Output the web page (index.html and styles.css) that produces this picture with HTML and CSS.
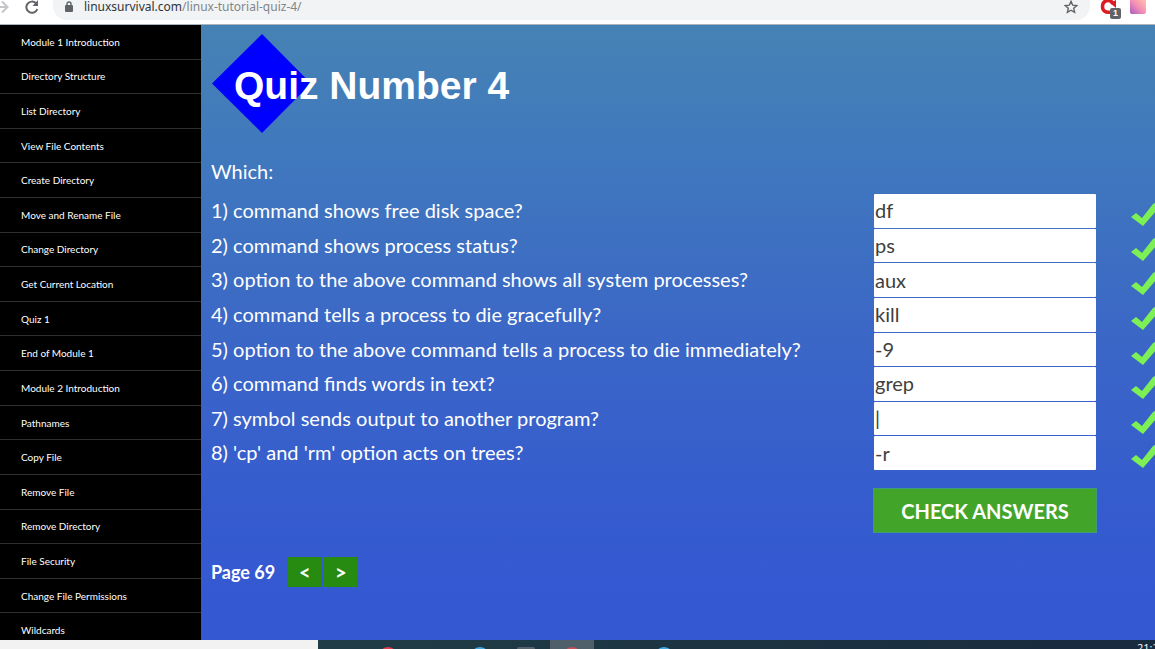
FILE: index.html
```html
<!DOCTYPE html>
<html lang="en">
<head>
<meta charset="utf-8">
<title>Linux Survival - Quiz 4</title>
<link rel="stylesheet" href="styles.css">
</head>
<body>
<header class="toolbar">
  <button class="tool forward" aria-label="Forward"><svg width="12" height="14" viewBox="0 0 12 14"><path d="M0 7H8M2 1.500L7.500 7L2 12.500" fill="none" stroke="#c3c5c8" stroke-width="2"/></svg></button>
  <button class="tool reload" aria-label="Reload"><svg width="14" height="14" viewBox="0 0 14 14"><path d="M12.300 9A5.600 5.600 0 1 1 11 3.300" fill="none" stroke="#5f6368" stroke-width="2"/><path d="M13 0V6H7.500Z" fill="#5f6368"/></svg></button>
  <div class="address">
    <svg width="8" height="12" viewBox="0 0 8 12"><rect y="4" width="8" height="7" rx="1" fill="#5f6368"/><path d="M2 5V3a2 2 0 0 1 4 0V5" fill="none" stroke="#5f6368" stroke-width="1.400"/></svg>
    <span class="url"><span class="host">linuxsurvival.com</span>/linux-tutorial-quiz-4/</span>
    <button class="tool star" aria-label="Bookmark"><svg width="14" height="14" viewBox="0 0 14 14"><path d="M7 1.400L8.700 5.200L12.800 5.600L9.700 8.300L10.600 12.300L7 10.200L3.400 12.300L4.300 8.300L1.200 5.600L5.300 5.200Z" fill="none" stroke="#5f6368" stroke-width="1.400"/></svg></button>
  </div>
  <button class="tool extension" aria-label="Extension"><svg width="22" height="22" viewBox="0 0 22 22"><path d="M13 3.500C10 -1.500 2.500 0 2.500 6.500C2.500 11 6 13 10 12" fill="none" stroke="#dc1c22" stroke-width="3.500"/><path d="M10 3L16 0V8Z" fill="#dc1c22"/></svg><span class="badge">1</span></button>
  <span class="profile"></span>
</header>

<div class="page">
  <nav class="sidebar">
    <ul class="modules">
      <li><a href="#">Module 1 Introduction</a></li>
      <li><a href="#">Directory Structure</a></li>
      <li><a href="#">List Directory</a></li>
      <li><a href="#">View File Contents</a></li>
      <li><a href="#">Create Directory</a></li>
      <li><a href="#">Move and Rename File</a></li>
      <li><a href="#">Change Directory</a></li>
      <li><a href="#">Get Current Location</a></li>
      <li><a href="#">Quiz 1</a></li>
      <li><a href="#">End of Module 1</a></li>
      <li><a href="#">Module 2 Introduction</a></li>
      <li><a href="#">Pathnames</a></li>
      <li><a href="#">Copy File</a></li>
      <li><a href="#">Remove File</a></li>
      <li><a href="#">Remove Directory</a></li>
      <li><a href="#">File Security</a></li>
      <li><a href="#">Change File Permissions</a></li>
      <li><a href="#">Wildcards</a></li>
    </ul>
  </nav>

  <main class="content">
    <div class="heading">
      <svg class="diamond" width="100" height="100" viewBox="0 0 100 100"><path d="M50 0L99 49.500L50 99L0 49.500Z" fill="#0000ff"/></svg>
      <h1>Quiz Number 4</h1>
    </div>
    <p class="lead">Which:</p>
    <form class="quiz">
      <div class="rows">
        <div class="row"><label for="q1">1) command shows free disk space?</label><input id="q1" type="text" value="df"><svg class="tick" viewBox="0 0 34 25"><use href="#check"/></svg></div>
        <div class="row"><label for="q2">2) command shows process status?</label><input id="q2" type="text" value="ps"><svg class="tick" viewBox="0 0 34 25"><use href="#check"/></svg></div>
        <div class="row"><label for="q3">3) option to the above command shows all system processes?</label><input id="q3" type="text" value="aux"><svg class="tick" viewBox="0 0 34 25"><use href="#check"/></svg></div>
        <div class="row"><label for="q4">4) command tells a process to die gracefully?</label><input id="q4" type="text" value="kill"><svg class="tick" viewBox="0 0 34 25"><use href="#check"/></svg></div>
        <div class="row"><label for="q5">5) option to the above command tells a process to die immediately?</label><input id="q5" type="text" value="-9"><svg class="tick" viewBox="0 0 34 25"><use href="#check"/></svg></div>
        <div class="row"><label for="q6">6) command finds words in text?</label><input id="q6" type="text" value="grep"><svg class="tick" viewBox="0 0 34 25"><use href="#check"/></svg></div>
        <div class="row"><label for="q7">7) symbol sends output to another program?</label><input id="q7" type="text" value="|"><svg class="tick" viewBox="0 0 34 25"><use href="#check"/></svg></div>
        <div class="row"><label for="q8">8) 'cp' and 'rm' option acts on trees?</label><input id="q8" type="text" value="-r"><svg class="tick" viewBox="0 0 34 25"><use href="#check"/></svg></div>
      </div>
      <button class="check" type="button">CHECK ANSWERS</button>
    </form>
    <div class="pager">
      <span class="number">Page 69</span>
      <button type="button" aria-label="Previous page">&lt;</button>
      <button type="button" aria-label="Next page">&gt;</button>
    </div>
  </main>
</div>

<footer class="taskbar">
  <div class="search"></div>
  <div class="apps">
    <span class="app red"></span>
    <span class="app"></span>
    <span class="app blue"></span>
    <span class="app gray"></span>
    <span class="app active red"></span>
    <span class="app"></span>
    <span class="app blue"></span>
  </div>
  <time class="clock">21:23</time>
</footer>

<svg class="defs" aria-hidden="true"><symbol id="check" viewBox="0 0 34 25"><path d="M0 15L5 11L11 16L22 2L26 0H33L12 24Z" fill="#7df056"/></symbol></svg>
</body>
</html>
```
FILE: styles.css
```css
* { box-sizing: border-box; }

body {
  margin: 0;
  height: 100vh;
  display: flex;
  flex-direction: column;
  overflow: hidden;
  font-family: Lato, "Liberation Sans", sans-serif;
  color: #fff;
}

button { font-family: inherit; cursor: pointer; }

.toolbar {
  flex: none;
  height: 25px;
  display: flex;
  align-items: flex-start;
  background: #fff;
  border-bottom: 1px solid #a9b4bf;
  overflow: hidden;
}
.tool { padding: 0; border: 0; background: none; flex: none; line-height: 0; }
.forward { width: 25px; text-align: left; }
.reload { width: 28px; text-align: left; }
.address {
  flex: 1;
  height: 20px;
  display: flex;
  align-items: center;
  gap: 11px;
  padding: 0 12px 6px;
  background: #f1f3f4;
  border-radius: 0 0 14px 14px;
}
.url { flex: 1; font: 12px/14px "Noto Sans", sans-serif; color: #80868b; }
.host { color: #303438; }
.extension { position: relative; width: 30px; margin-left: 10px; text-align: left; }
.badge {
  position: absolute;
  left: 10px;
  top: 8px;
  width: 11px;
  height: 11px;
  border-radius: 2px;
  background: #5f6368;
  color: #fff;
  font: bold 9px/11px "Liberation Sans", sans-serif;
  text-align: center;
}
.profile {
  width: 16px;
  height: 14px;
  margin-right: 9px;
  flex: none;
  border-radius: 0 0 2px 2px;
  background: linear-gradient(45deg, #a35bc0, #f58fb5 50%, #ffc2a8);
}

.page { flex: 1; min-height: 0; display: flex; }

.sidebar { flex: none; width: 201px; background: #000; overflow: hidden; }
.modules {
  height: 623px;
  margin: 0;
  padding: 0;
  list-style: none;
  display: grid;
  grid-auto-rows: 1fr;
}
.modules li { border-bottom: 1px solid #303030; display: flex; align-items: center; }
.modules a { flex: 1; padding-left: 21px; color: #fff; font-size: 10px; line-height: 16px; text-decoration: none; }

.content {
  flex: 1;
  min-width: 0;
  padding: 9px 0 0 10px;
  background: linear-gradient(#4682b4, #4079bd 20%, #3b67c6 50%, #355bcf 80%, #3457d3);
  overflow: hidden;
}
.heading { display: grid; align-items: center; height: 100px; }
.heading > * { grid-area: 1 / 1; }
h1 { position: relative; margin: 4px 0 0 23px; font: bold 39px/44px "Liberation Sans", sans-serif; }
.diamond { margin-left: 1px; }
.lead { margin: 24px 0 9px; font-size: 20px; line-height: 26px; }

.rows { display: grid; grid-auto-rows: 1fr; height: 277px; }
.row { display: grid; grid-template-columns: 1fr 224px 58px; align-items: stretch; }
.row label { font-size: 20px; line-height: 34px; }
.row input {
  min-width: 0;
  margin: 1px 1px 0;
  padding: 0 1px 1px;
  border: 0;
  border-radius: 1px;
  background: #fff;
  color: #404040;
  font: 20px Lato, sans-serif;
}
.tick { width: 34px; height: 25px; margin: 9px 0 0 34px; }
.check {
  display: block;
  width: 224px;
  height: 45px;
  margin: 18px 58px 0 auto;
  border: 1px solid #3f9b7a;
  background: #42a52a;
  color: #fff;
  font-size: 20px;
  font-weight: bold;
}
.pager { display: flex; align-items: center; margin-top: 24px; gap: 3px; }
.number { margin-right: 10px; font-size: 18px; font-weight: bold; }
.pager button {
  width: 33px;
  height: 30px;
  padding: 0;
  border: 0;
  background: #278b12;
  color: #fff;
  font-size: 20px;
  font-weight: bold;
}

.taskbar {
  flex: none;
  height: 9px;
  display: flex;
  background: linear-gradient(90deg, #203c46 30%, #182a3e);
  overflow: hidden;
}
.search { flex: none; width: 318px; background: #f2f2f2; }
.apps { flex: 1; display: flex; padding-left: 48px; }
.app { width: 44px; height: 9px; margin-right: 2px; overflow: hidden; }
.app::before { content: ""; display: block; width: 18px; height: 18px; margin: 7px auto 0; border-radius: 50%; }
.red::before { background: #e23b4b; }
.blue::before { background: #3fa6e0; }
.gray::before { background: #56626a; border-radius: 2px; }
.active { background: #50606a; }
.active::before { background: #c8505a; }
.clock { width: 18px; padding-top: 2px; font: 11px/12px "Open Sans", sans-serif; }

.defs { position: absolute; width: 0; height: 0; }
```
